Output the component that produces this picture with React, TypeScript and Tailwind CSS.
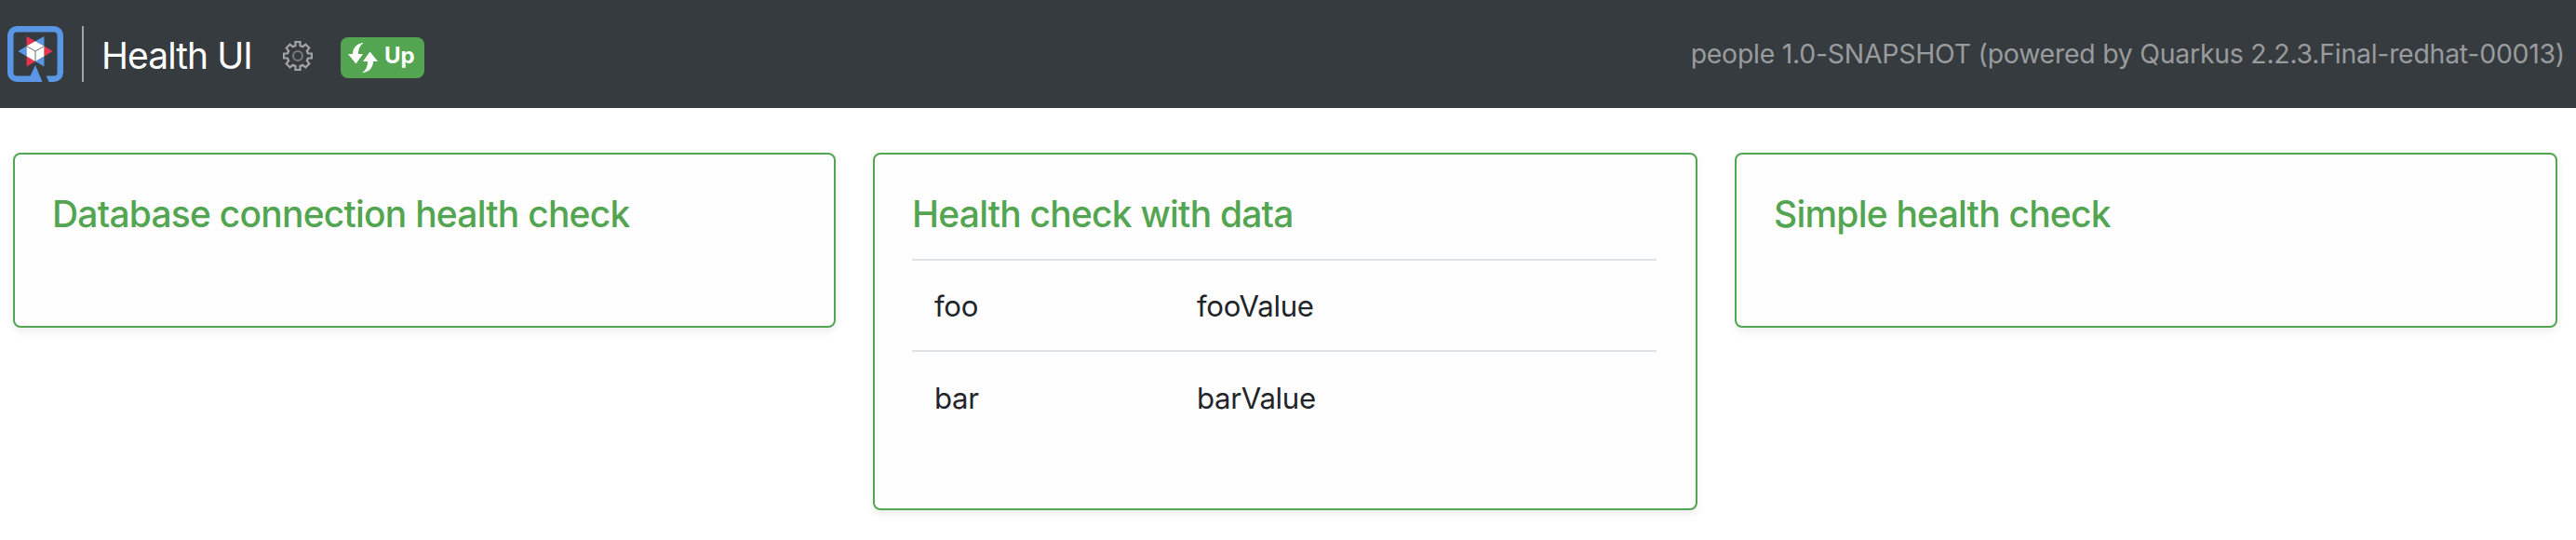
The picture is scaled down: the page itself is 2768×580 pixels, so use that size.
import React from "react";

function Logo() {
  return (
    <svg className="h-[60px] w-[60px] shrink-0" viewBox="0 0 60 60">
      <path
        fill="#5a96e6"
        d="M10 0H50A10 10 0 0 1 60 10V50A10 10 0 0 1 50 60H44.5L41.7 53.5H50A3.5 3.5 0 0 0 53.5 50V10A3.5 3.5 0 0 0 50 6.5H10A3.5 3.5 0 0 0 6.5 10V50A3.5 3.5 0 0 0 10 53.5H24.5L30 42L37.5 60H10A10 10 0 0 1 0 50V10A10 10 0 0 1 10 0Z"
      />
      <path fill="#eb3350" d="M20.6 11L30 16.2L20.6 21.6ZM48.6 27L39.4 21.6V32.6ZM20.6 43.4V32.6L30 38Z" />
      <path fill="#5a96e6" d="M39.4 11L30 16.2L39.4 21.6ZM11.4 27L20.6 21.6V32.6ZM39.4 43.4V32.6L30 38Z" />
      <path fill="#fff" d="M30 16.2L39.4 21.6V32.6L30 38L20.6 32.6V21.6Z" />
      <path fill="none" stroke="#6b6f72" strokeWidth="1" d="M20.6 21.6L30 27L39.4 21.6M30 27V38" />
    </svg>
  );
}

function Gear() {
  return (
    <svg className="h-8 w-8 shrink-0" viewBox="0 0 32 32" fill="none" stroke="#a3a5a7" strokeWidth="2.2">
      <path d="M13.5 1H18.5V5L21.2 6.2L24.5 3.7L28.3 7.5L25.8 10.8L27 13.5H31V18.5H27L25.8 21.2L28.3 24.5L24.5 28.3L21.2 25.8L18.5 27V31H13.5V27L10.8 25.8L7.5 28.3L3.7 24.5L6.2 21.2L5 18.5H1V13.5H5L6.2 10.8L3.7 7.5L7.5 3.7L10.8 6.2L13.5 5Z" />
      <circle cx="16" cy="16" r="5" stroke="#74787a" />
    </svg>
  );
}

function Arrows() {
  return (
    <svg className="h-8 w-8 shrink-0" viewBox="0 0 32 32" fill="#fff">
      <path d="M17 0C10 0 5 5 5 12H0L8.5 22.5L16 12H11C11 7 12.500 2.500 17 0Z" />
      <path d="M15 32C22 32 27 27 27 20H32L23.500 9.500L16 20H21C21 25 19.500 29.500 15 32Z" />
    </svg>
  );
}

function Card({ title, children, className }: { title: string; children?: React.ReactNode; className: string }) {
  return (
    <section
      className={`rounded-lg border-2 border-[#53a551] bg-[#fefefe] px-10 pt-10 shadow-[0_4px_8px_rgba(0,0,0,0.075)] ${className}`}
    >
      <h5 className="h-[72px] text-[39px] leading-[48px] font-medium tracking-[-0.78px] text-[#53a551]">{title}</h5>
      {children}
    </section>
  );
}

const data = [
  ["foo", "fooValue"],
  ["bar", "barValue"],
];

export default function App() {
  return (
    <div className="min-h-[580px] w-full bg-white font-[Inter,sans-serif] text-[#212529]">
      <header className="flex h-[116px] items-center justify-between bg-[#363b3f] pr-3 pl-2">
        <div className="flex items-center">
          <Logo />
          <span className="ml-5 h-[60px] w-0.5 bg-[#a0a2a4]" />
          <h1 className="ml-[19px] h-[60px] w-[163px] text-[39px] leading-[63px] tracking-[-0.95px] whitespace-nowrap text-white">
            Health UI
          </h1>
          <span className="mt-1 ml-8 flex">
            <Gear />
          </span>
          <span className="mt-2 ml-[30px] flex h-11 w-[90px] items-center rounded-lg bg-[#53a551] pl-2 text-2xl font-bold text-white">
            <Arrows />
            <span className="mt-[-4px] ml-[7px]">Up</span>
          </span>
        </div>
        <span className="text-[28.4px] tracking-[-0.23px] whitespace-nowrap text-[#999b9d]">
          people 1.0-SNAPSHOT (powered by Quarkus 2.2.3.Final-redhat-00013)
        </span>
      </header>
      <main className="flex items-start pt-12 pr-5 pl-3.5">
        <Card title="Database connection health check" className="h-[188px] w-[884px]" />
        <Card title="Health check with data" className="ml-10 h-[384px] w-[886px]">
          <table className="w-[800px] table-fixed text-[31.2px] leading-[48px] tracking-[-0.3px]">
            <tbody>
              {data.map(([key, value]) => (
                <tr key={key} className="h-[98px] border-t-2 border-[#dee2e6]">
                  <td className="w-[282px] px-6 pt-0.5">{key}</td>
                  <td className="px-6 pt-0.5">{value}</td>
                </tr>
              ))}
            </tbody>
          </table>
        </Card>
        <Card title="Simple health check" className="ml-10 h-[188px] w-[884px]" />
      </main>
    </div>
  );
}
